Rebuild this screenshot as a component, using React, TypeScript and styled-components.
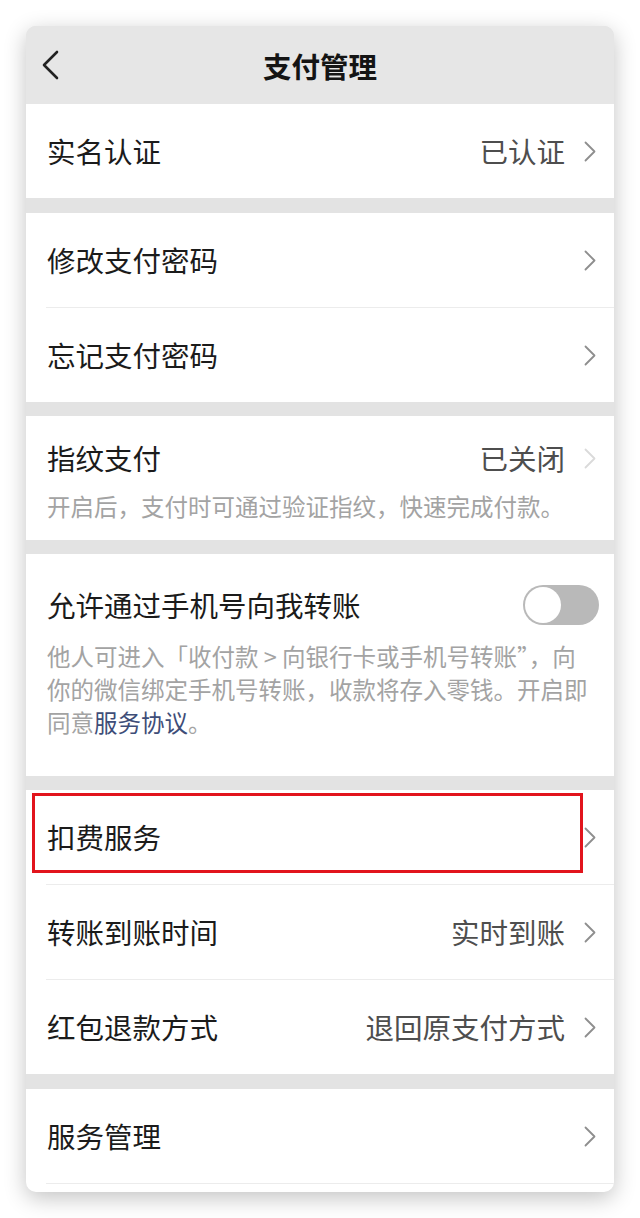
import React from 'react'
import styled, { createGlobalStyle } from 'styled-components'

const GlobalStyle = createGlobalStyle`
    html, body {
        margin: 0;
        padding: 0;
        background: #ffffff;
    }
    body {
        font-family: 'Noto Sans CJK SC', 'Noto Sans', sans-serif;
        -webkit-font-smoothing: antialiased;
    }
`

type Item = {
    label: string
    value?: string
    highlight?: boolean
}

const payItems: Item[] = [{ label: '修改支付密码' }, { label: '忘记支付密码' }]

const serviceItems: Item[] = [
    { label: '扣费服务', highlight: true },
    { label: '转账到账时间', value: '实时到账' },
    { label: '红包退款方式', value: '退回原支付方式' },
]

const Chevron: React.FC<{ light?: boolean }> = ({ light }) => (
    <ChevronIcon width="12" height="21" viewBox="0 0 12 21" $light={light}>
        <polyline points="1.5,1.5 10.5,10.5 1.5,19.5" />
    </ChevronIcon>
)

const BackIcon: React.FC = () => (
    <BackSvg width="20" height="30" viewBox="0 0 20 30">
        <polyline points="16,2 3,15 16,28" />
    </BackSvg>
)

const App: React.FC = () => {
    const renderRows = (items: Item[]) =>
        items.map((item, i) => (
            <React.Fragment key={item.label}>
                {i > 0 && <Divider />}
                <Row>
                    <Label>{item.label}</Label>
                    <Right>
                        {item.value && <Value>{item.value}</Value>}
                        <Chevron />
                    </Right>
                    {item.highlight && <Highlight />}
                </Row>
            </React.Fragment>
        ))

    return (
        <>
            <GlobalStyle />
            <Page>
                <Card>
                    <Header>
                        <BackButton>
                            <BackIcon />
                        </BackButton>
                        <Title>支付管理</Title>
                        <span />
                    </Header>

                    <Section $gap={0}>
                        <Row>
                            <Label>实名认证</Label>
                            <Right>
                                <Value>已认证</Value>
                                <Chevron />
                            </Right>
                        </Row>
                    </Section>

                    <Section $gap={15}>{renderRows(payItems)}</Section>

                    <Section>
                        <Block $top={22} $bottom={17}>
                            <BlockHead>
                                <Label>指纹支付</Label>
                                <Right>
                                    <Value>已关闭</Value>
                                    <Chevron light />
                                </Right>
                            </BlockHead>
                            <Desc $gap={12}>
                                开启后，支付时可通过验证指纹，快速完成付款。
                            </Desc>
                        </Block>
                    </Section>

                    <Section>
                        <Block $top={31} $bottom={37} $tight>
                            <BlockHead>
                                <Label>允许通过手机号向我转账</Label>
                                <Toggle>
                                    <Knob />
                                </Toggle>
                            </BlockHead>
                            <Desc $gap={15}>
                                他人可进入「收付款 &gt; 向银行卡或手机号转账”，向
                                <br />
                                你的微信绑定手机号转账，收款将存入零钱。开启即
                                <br />
                                同意<Link>服务协议</Link>。
                            </Desc>
                        </Block>
                    </Section>

                    <Section>{renderRows(serviceItems)}</Section>

                    <Section $gap={15} $last>
                        <Row>
                            <Label>服务管理</Label>
                            <Right>
                                <Chevron />
                            </Right>
                        </Row>
                        <Divider />
                    </Section>
                </Card>
            </Page>
        </>
    )
}

export default App

const Page = styled.div`
    padding: 26px;
`

const Card = styled.div`
    width: 588px;
    background: #e3e3e3;
    border-radius: 10px;
    overflow: hidden;
    box-shadow: 0 6px 22px rgba(0, 0, 0, 0.24);
`

const Header = styled.div`
    height: 78px;
    background: #e6e6e6;
    display: grid;
    grid-template-columns: 80px 1fr 80px;
    align-items: center;
`

const BackButton = styled.div`
    display: flex;
    align-items: center;
    padding-left: 15px;
`

const BackSvg = styled.svg`
    fill: none;
    stroke: #222222;
    stroke-width: 2.6;
    stroke-linecap: round;
    stroke-linejoin: round;
`

const Title = styled.div`
    text-align: center;
    font-size: 28.5px;
    font-weight: 700;
    color: #141414;
`

const Section = styled.div<{ $gap?: number; $last?: boolean }>`
    background: #ffffff;
    margin-top: ${(p) => (p.$gap ?? 14)}px;
    padding-bottom: ${(p) => (p.$last ? '8px' : '0')};
`

const Row = styled.div`
    position: relative;
    height: 94px;
    display: flex;
    align-items: center;
    justify-content: space-between;
    padding: 0 18px 0 21px;
`

const Divider = styled.div`
    height: 1px;
    margin-left: 20px;
    background: #ececec;
`

const Label = styled.div`
    font-size: 28.5px;
    line-height: 40px;
    color: #1b1b1b;
`

const Right = styled.div`
    display: flex;
    align-items: center;
    gap: 19px;
`

const Value = styled.div`
    font-size: 28.5px;
    line-height: 40px;
    color: #4e4e4e;
`

const ChevronIcon = styled.svg<{ $light?: boolean }>`
    fill: none;
    stroke: ${(p) => (p.$light ? '#dadada' : '#8e8e8e')};
    stroke-width: 1.8;
    stroke-linecap: round;
    stroke-linejoin: round;
    flex-shrink: 0;
`

const Highlight = styled.div`
    position: absolute;
    left: 6px;
    top: 3px;
    width: 551px;
    height: 80px;
    box-sizing: border-box;
    border: 3px solid #e2141c;
    pointer-events: none;
`

const Block = styled.div<{ $top: number; $bottom: number; $tight?: boolean }>`
    padding: ${(p) => p.$top}px ${(p) => (p.$tight ? 15 : 18)}px
        ${(p) => p.$bottom}px 21px;
`

const BlockHead = styled.div`
    display: flex;
    align-items: center;
    justify-content: space-between;
`

const Desc = styled.div<{ $gap: number }>`
    margin-top: ${(p) => p.$gap}px;
    font-size: 23.5px;
    line-height: 33px;
    color: #a3a3a3;
    white-space: nowrap;
`

const Link = styled.span`
    color: #3e4d78;
`

const Toggle = styled.span`
    width: 76px;
    height: 40px;
    border-radius: 20px;
    background: #b9b9b9;
    display: flex;
    align-items: center;
    padding: 0 2px;
    box-sizing: border-box;
    flex-shrink: 0;
`

const Knob = styled.span`
    width: 36px;
    height: 36px;
    border-radius: 50%;
    background: #ffffff;
`
